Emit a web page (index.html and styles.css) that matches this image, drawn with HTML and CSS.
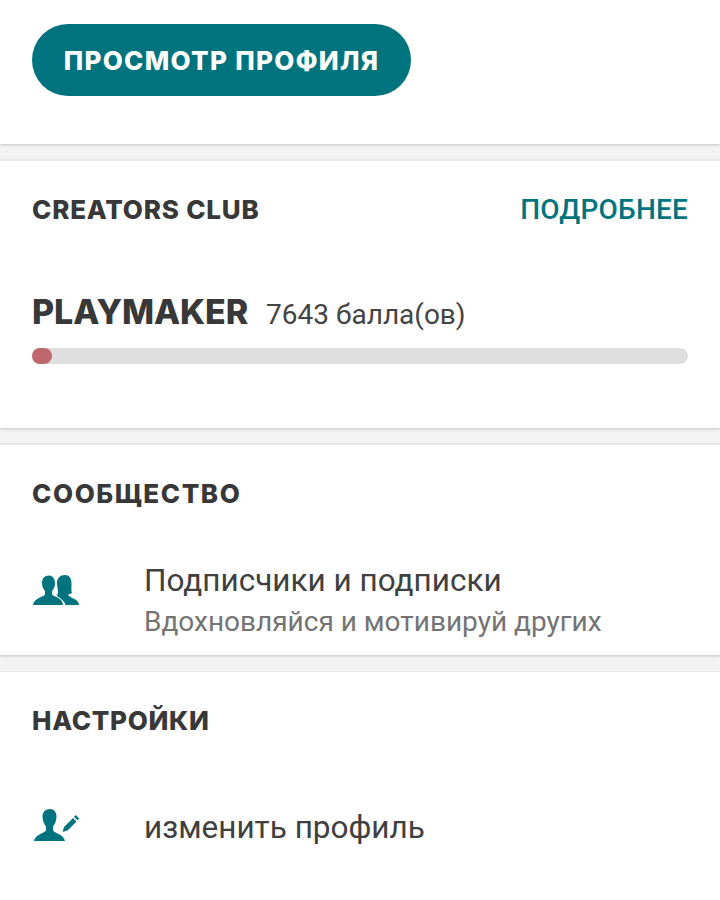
FILE: index.html
```html
<!DOCTYPE html>
<html>
	<head>
		<meta charset="utf-8">
		<title>Профиль</title>
		<link rel="stylesheet" href="styles.css">
	</head>
	<body>
		<div class="card card-top">
			<a class="btn">ПРОСМОТР ПРОФИЛЯ</a>
		</div>
		<div class="card card-club">
			<div class="head-row">
				<h2 class="h-club">CREATORS CLUB</h2>
				<a class="more">ПОДРОБНЕЕ</a>
			</div>
			<div class="level">
				<span class="level-name">PLAYMAKER</span>
				<span class="level-points">7643 балла(ов)</span>
			</div>
			<div class="bar"><div class="bar-fill"></div></div>
		</div>
		<div class="card card-community">
			<h2 class="h-community">СООБЩЕСТВО</h2>
			<div class="item item-community">
				<svg class="icon" width="48" height="34" viewBox="0 0 48 34">
					<path d="M17 2.500c-4.500 0-7 3-7 7.500 0 3 1 6 3 8v3c0 3-11 3.500-12 11h30c-.5-5-4-7-8-8.500-2-1-3-1.500-3-3v-2.500c2-2 3-5 3-8 0-4.500-2.500-7.500-6-7.500z"/>
					<path d="M33 2c-5 0-8 3.500-8 8 0 4 1 6 1 8.500 0 2-.5 3.500-1.500 4.500 2 1 3.500 1.500 4.500 3 2 1.500 4 3.500 4.500 6H47c-.5-5-5-6-8.500-8-1.500-.8-2-1.500-2-3 1.500 0 3-.5 3.500-1-1-2-.5-5.500-.5-9.500C39.500 5 37 2 33 2z"/>
				</svg>
				<div class="item-text">
					<div class="item-title">Подписчики и подписки</div>
					<div class="item-sub">Вдохновляйся и мотивируй других</div>
				</div>
			</div>
		</div>
		<div class="card card-settings">
			<h2 class="h-settings">НАСТРОЙКИ</h2>
			<div class="item item-settings">
				<svg class="icon icon-edit" width="48" height="34" viewBox="0 0 48 34">
					<path d="M18 0c-4.500 0-7.500 3-7.500 7.500 0 3.500 1.500 7.500 3.500 10v3.500C14 24 3 25 2 32h31c-1-7-12-8-12-11v-3.500c2-2.500 3.500-6.500 3.500-10C24.500 3 22 0 18 0z"/>
					<path d="M30.500 23l1.500-5L41 9l3.500 3.500-9 9zM42 7.800l1.700-1.700 3.500 3.500-1.700 1.700z"/>
				</svg>
				<div class="item-title">изменить профиль</div>
			</div>
		</div>
	</body>
</html>
```

FILE: styles.css
```css
*{
	padding: 0;
	margin: 0;
	box-sizing: border-box;
}
html,body{
	height: 900px;
	overflow: hidden;
}
body{
	background: #f3f3f3;
	font-family: Roboto, "Noto Sans", sans-serif;
	color: #333;
}
.card{
	background: #fff;
	padding: 0 32px;
	margin-bottom: 16px;
	border-top: 1px solid #e8e8e8;
	box-shadow: 0 1px 3px rgba(0,0,0,0.2);
}
.card-top{
	height: 144px;
	padding-top: 24px;
	border-top: 0;
}
.card-club{
	height: 268px;
	padding-top: 32px;
}
.card-community{
	height: 211px;
	padding-top: 32px;
}
.card-settings{
	height: 229px;
	margin-bottom: 0;
	padding-top: 32px;
	box-shadow: none;
}
.btn{
	display: flex;
	align-items: center;
	justify-content: center;
	width: 379px;
	height: 72px;
	border-radius: 36px;
	background: #00747e;
	color: #fff;
	font-family: Inter, sans-serif;
	font-weight: 800;
	font-size: 26px;
	letter-spacing: 1.3px;
}
h2{
	font-family: Inter, sans-serif;
	font-weight: 800;
	font-size: 26px;
	line-height: 34px;
	color: #383838;
}
.h-club{
	letter-spacing: 0.8px;
}
.h-community{
	letter-spacing: 1.6px;
}
.h-settings{
	letter-spacing: 0.7px;
}
.head-row{
	display: flex;
	justify-content: space-between;
	align-items: center;
}
.more{
	font-family: Roboto, sans-serif;
	font-weight: 500;
	font-size: 28px;
	line-height: 32px;
	letter-spacing: 0.2px;
	color: #00747e;
}
.level{
	display: flex;
	align-items: baseline;
	gap: 18px;
	margin-top: 64px;
}
.level-name{
	font-family: Inter, sans-serif;
	font-weight: 800;
	font-size: 34px;
	line-height: 42px;
	letter-spacing: -0.1px;
	color: #383838;
}
.level-points{
	font-size: 28px;
	color: #444;
}
.bar{
	height: 16px;
	margin-top: 15px;
	background: #dfdfdf;
	border-radius: 8px;
}
.bar-fill{
	width: 20px;
	height: 16px;
	background: #c0666f;
	border-radius: 8px;
}
.item{
	display: flex;
	align-items: flex-start;
	gap: 64px;
}
.item-community{
	margin-top: 50px;
}
.item-settings{
	margin-top: 70px;
}
.icon{
	flex: none;
	fill: #00747e;
	margin-top: 12px;
}
.icon-edit{
	margin-top: 1px;
}
.item-title{
	font-size: 31.5px;
	line-height: 40px;
	color: #404040;
}
.item-sub{
	font-size: 28px;
	line-height: 42px;
	color: #747474;
}
```
